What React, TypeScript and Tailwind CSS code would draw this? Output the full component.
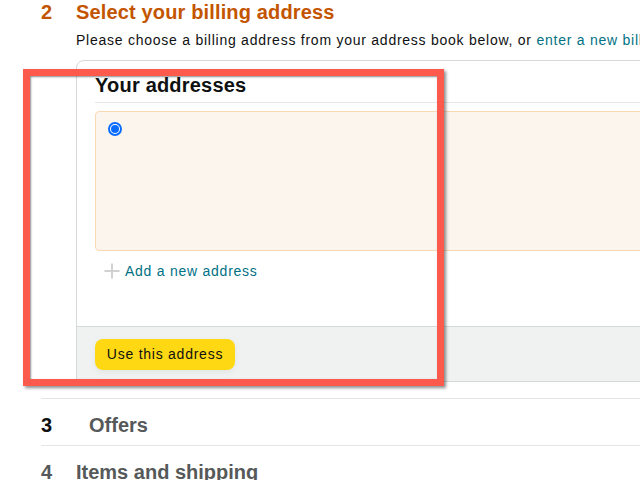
import { useState } from 'react';

export default function App() {
  const [selected, setSelected] = useState(true);

  return (
    <div className="relative w-[640px] h-[480px] overflow-hidden bg-white text-[#0f1111] font-['Liberation_Sans',Arial,sans-serif]">
      <div className="pl-[41px]">
        {/* step 2 */}
        <div className="flex items-start text-[20px] leading-[24px] font-bold text-[#c45500]">
          <span className="w-[35px]">2</span>
          <h2 className="tracking-[0.15px]">Select your billing address</h2>
        </div>
        <div className="pl-[35px]">
          <p className="mt-[6px] text-[14px] leading-[20px] tracking-[0.75px] whitespace-nowrap">
            Please choose a billing address from your address book below, or{' '}
            <a className="text-[#007185]">enter a new billing address</a>
          </p>

          <div className="mt-[10px] w-[640px] rounded-t-[8px] border border-[#d5d9d9] overflow-hidden">
            <div className="px-[18px]">
              <h3 className="pt-[12px] pb-[5px] text-[20px] leading-[24px] font-bold tracking-[0.2px] border-b border-[#e7e7e7]">
                Your addresses
              </h3>
              <div className="mt-[8px] h-[140px] rounded-[4px] border border-[#fbd8b4] bg-[#fcf5ee] pl-[12px] pt-[10px]">
                <button
                  onClick={() => setSelected(!selected)}
                  className="w-[14px] h-[14px] rounded-full border-2 border-[#0a6cff] bg-white flex items-center justify-center"
                >
                  {selected && <span className="block w-[8px] h-[8px] rounded-full bg-[#0a6cff]" />}
                </button>
              </div>
              <div className="mt-[10px] mb-[45px] flex items-center gap-[5px] text-[14px] leading-[20px] tracking-[0.75px] pl-[9px]">
                <svg width="16" height="16" viewBox="0 0 16 16" className="shrink-0">
                  <path d="M8 0.5v15M0.5 8h15" stroke="#d0d1d1" strokeWidth="2" fill="none" />
                </svg>
                <a className="text-[#007185]">Add a new address</a>
              </div>
            </div>
            <div className="h-[55px] bg-[#f0f2f2] border-t border-[#d5d9d9] px-[18px] pt-[12px]">
              <button className="h-[31px] w-[140px] rounded-[8px] bg-[#ffd814] text-[14px] tracking-[0.75px] text-[#0f1111] shadow-[0_2px_5px_rgba(213,217,217,0.5)]">
                Use this address
              </button>
            </div>
          </div>
        </div>

        {/* later steps */}
        <div className="mt-[16px] border-t border-[#e3e6e6]">
          <div className="h-[47px] pt-[5px] flex items-center text-[20px] font-bold border-b border-[#e3e6e6]">
            <span className="w-[48px] text-[#0f1111]">3</span>
            <span className="text-[#565959]">Offers</span>
          </div>
          <div className="pt-[14px] flex text-[20px] leading-[24px] font-bold text-[#565959]">
            <span className="w-[35px]">4</span>
            <span>Items and shipping</span>
          </div>
        </div>
      </div>

      {/* annotation overlay */}
      <div className="absolute left-[23px] top-[69px] w-[421px] h-[317px] border-[7px] border-[#fd5a4e] shadow-[2px_2px_3px_rgba(0,0,0,0.45),inset_1px_1px_2px_rgba(0,0,0,0.45)] pointer-events-none" />
    </div>
  );
}
